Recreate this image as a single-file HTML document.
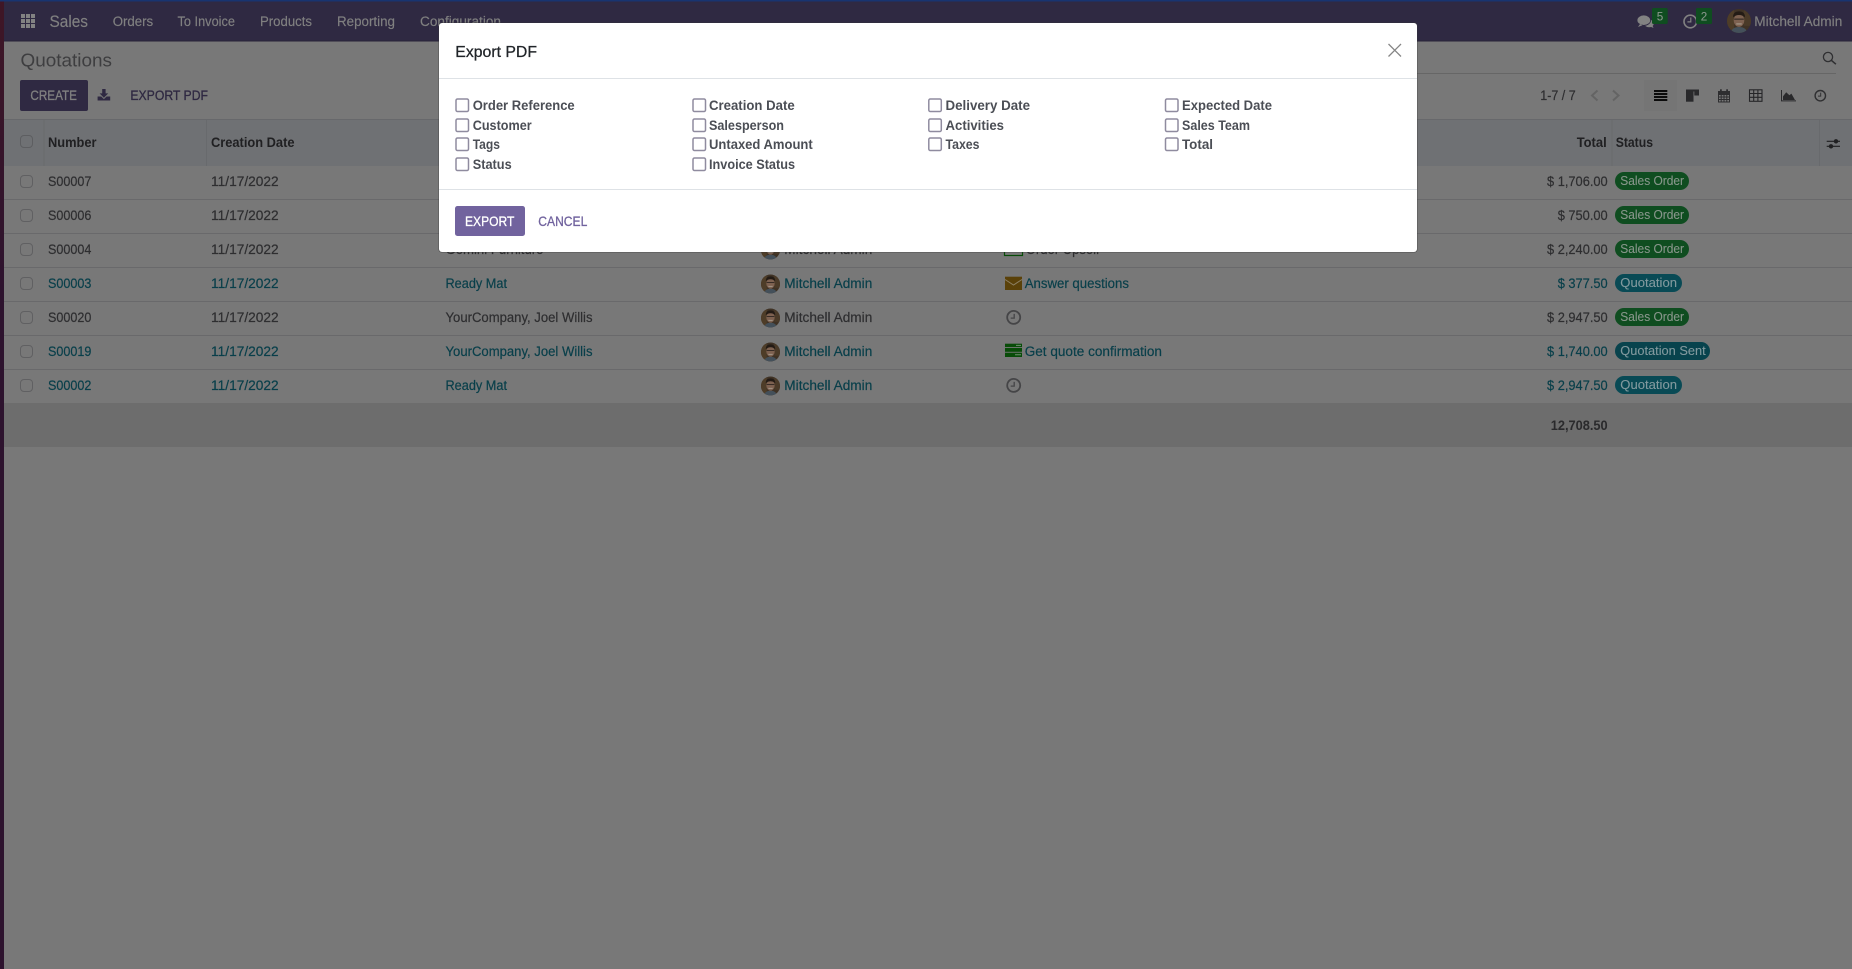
<!DOCTYPE html>
<html lang="en">
<head>
<meta charset="utf-8">
<title>Quotations - Export PDF</title>
<style>
html,body{margin:0;padding:0;width:1852px;height:969px;overflow:hidden;background:#787878}
svg{display:block;font-family:"Liberation Sans",sans-serif;font-size:13.5px}
.d{fill:#2e2e30;stroke:#2e2e30;stroke-width:.2}
.l{fill:#083f4a;stroke:#083f4a;stroke-width:.2}
.h{fill:#202022;font-weight:bold;font-size:13.5px}
.n{fill:#808080;font-size:13.5px;stroke:#808080;stroke-width:.15}
.b{fill:#88968b;font-size:12.5px;stroke:#88968b;stroke-width:.1}
.bi{fill:#82999e;font-size:12.5px;stroke:#82999e;stroke-width:.1}
.m{fill:#4b4e55;font-weight:bold;font-size:13.5px}
.c{fill:#fff;stroke:#8f8b9f;stroke-width:1.5}
.k{fill:none;stroke:#606062;stroke-width:1}
.ln{fill:#69696b}
</style>
</head>
<body>
<svg width="1852" height="969" viewBox="0 0 1852 969" xmlns="http://www.w3.org/2000/svg">
<defs>
<linearGradient id="strip" x1="0" y1="0" x2="0" y2="1"><stop offset="0" stop-color="#3f1626"/><stop offset=".3" stop-color="#2d132e"/><stop offset="1" stop-color="#2d132e"/></linearGradient>
<clipPath id="av"><circle cx="0" cy="0" r="10"/></clipPath>
<g id="avatar"><g clip-path="url(#av)">
<rect x="-10" y="-10" width="20" height="20" fill="#3f3225"/>
<rect x="-10" y="-10" width="6" height="20" fill="#4e3d28"/>
<rect x="4" y="-10" width="6" height="14" fill="#4a3a28"/>
<path d="M-7 10q1-5 7-5t7 5z" fill="#44505a"/>
<ellipse cx="0" cy="-.5" rx="4.4" ry="5.4" fill="#7d6150"/>
<path d="M-5-3q0-5 5-5t5 5q-2-2-5-2t-5 2z" fill="#231b15"/>
<rect x="-4" y="-2" width="8" height=".9" fill="#2c2420"/>
<rect x="-2.3" y="2" width="4.6" height=".9" fill="#a89e90"/>
</g></g>
<g id="clock"><circle cx="0" cy="0" r="6.5" fill="none" stroke="#454547" stroke-width="1.8"/><path d="M.5-3.5V.7H-3" fill="none" stroke="#454547" stroke-width="1.3"/></g>
</defs>

<!-- page -->
<rect width="1852" height="969" fill="#787878"/>
<rect x="0" y="0" width="4" height="969" fill="url(#strip)"/>

<!-- navbar -->
<rect x="4" y="0" width="1848" height="41" fill="#2f2942"/>
<rect x="0" y="0" width="1852" height="1.5" fill="#183470"/>
<rect x="4" y="40.5" width="1848" height="1" fill="#272238"/>
<g fill="#828282">
<rect x="21" y="14" width="4" height="4"/><rect x="26" y="14" width="4" height="4"/><rect x="31" y="14" width="4" height="4"/>
<rect x="21" y="19" width="4" height="4"/><rect x="26" y="19" width="4" height="4"/><rect x="31" y="19" width="4" height="4"/>
<rect x="21" y="24" width="4" height="4"/><rect x="26" y="24" width="4" height="4"/><rect x="31" y="24" width="4" height="4"/>
</g>
<text x="49.5" y="27" style="font-size:17px" class="n" textLength="38.5" lengthAdjust="spacingAndGlyphs">Sales</text>
<text x="112.7" y="26" class="n" textLength="40.5" lengthAdjust="spacingAndGlyphs">Orders</text>
<text x="177.5" y="26" class="n" textLength="57.5" lengthAdjust="spacingAndGlyphs">To Invoice</text>
<text x="260" y="26" class="n" textLength="52" lengthAdjust="spacingAndGlyphs">Products</text>
<text x="337" y="26" class="n" textLength="58" lengthAdjust="spacingAndGlyphs">Reporting</text>
<text x="420" y="26" class="n" textLength="81" lengthAdjust="spacingAndGlyphs">Configuration</text>
<!-- systray -->
<ellipse cx="1649" cy="23.5" rx="4.8" ry="3.8" fill="#828282"/>
<path d="M1652.5 25.5l1 2.5-3.5-1.5z" fill="#828282"/>
<ellipse cx="1643.8" cy="20.2" rx="6.8" ry="5.2" fill="#828282" stroke="#2f2942" stroke-width=".8"/>
<path d="M1640 24l-2 3 4.5-1.8z" fill="#828282"/>
<rect x="1652" y="8" width="15.7" height="16" rx="1.5" fill="#0f4d20"/>
<text x="1656.8" y="20.5" class="b" style="font-size:12px" textLength="6.5" lengthAdjust="spacingAndGlyphs">5</text>
<circle cx="1690.3" cy="21.5" r="6.3" fill="none" stroke="#828282" stroke-width="1.6"/>
<path d="M1690.8 17.5v4.4h-3.4" fill="none" stroke="#828282" stroke-width="1.2"/>
<rect x="1696" y="8" width="16" height="16" rx="1.5" fill="#0f4d20"/>
<text x="1700.8" y="20.5" class="b" style="font-size:12px" textLength="6.5" lengthAdjust="spacingAndGlyphs">2</text>
<use href="#avatar" transform="translate(1739 21) scale(1.2)"/>
<text x="1754.3" y="26" class="n" textLength="88" lengthAdjust="spacingAndGlyphs">Mitchell Admin</text>

<!-- control panel -->
<text x="20.5" y="66.5" style="font-size:18.5px;fill:#3e3e40" textLength="91.5" lengthAdjust="spacingAndGlyphs">Quotations</text>
<rect x="1400" y="73" width="436" height="1" fill="#666"/>
<circle cx="1828" cy="57" r="4.6" fill="none" stroke="#303032" stroke-width="1.3"/>
<path d="M1831.3 60.3l4.6 3.9" stroke="#303032" stroke-width="1.6" fill="none"/>

<rect x="20" y="80" width="68" height="31" rx="2" fill="#2f2942"/>
<text x="30.4" y="100" class="n" style="font-size:13.5px;stroke-width:.3" textLength="46.6" lengthAdjust="spacingAndGlyphs">CREATE</text>
<path d="M102.2 89h3.4v4.4h2.6l-4.3 4.3-4.3-4.3h2.6z" fill="#2f2942"/>
<path d="M97.6 96.5h3.6l2.7 2.6 2.7-2.6h3.6v4h-12.6z" fill="#2f2942"/>
<text x="130.4" y="100" style="font-size:13.5px;fill:#2f2942;stroke:#2f2942;stroke-width:.3" textLength="77.6" lengthAdjust="spacingAndGlyphs">EXPORT PDF</text>

<text x="1540.3" y="100" class="d" textLength="35.4" lengthAdjust="spacingAndGlyphs">1-7 / 7</text>
<path d="M1597.5 90.5l-5.5 5 5.5 5" fill="none" stroke="#646464" stroke-width="2"/>
<path d="M1613 90.5l5.5 5-5.5 5" fill="none" stroke="#646464" stroke-width="2"/>
<rect x="1644" y="80" width="33" height="31" fill="#757575"/>
<g fill="#0b0b0b">
<rect x="1654" y="90" width="13.3" height="2"/><rect x="1654" y="93" width="13.3" height="2"/><rect x="1654" y="96" width="13.3" height="2"/><rect x="1654" y="99" width="13.3" height="2"/>
</g>
<g fill="#29292b">
<rect x="1686" y="89.5" width="13" height="2"/><rect x="1686" y="91.5" width="7.5" height="10.2"/><rect x="1694.3" y="91.5" width="4.7" height="4"/>
</g>
<g fill="none" stroke="#2e2e30" stroke-width="1">
<rect x="1718.5" y="91.5" width="11" height="10.5"/>
<path d="M1718.5 94.5h11M1718.5 97h11M1718.5 99.5h11M1721.2 94.5v7.5M1724 94.5v7.5M1726.8 94.5v7.5"/>
</g>
<rect x="1718.5" y="91.5" width="11" height="2.5" fill="#2e2e30"/>
<rect x="1720" y="89.3" width="1.8" height="3" fill="#2e2e30"/><rect x="1726.2" y="89.3" width="1.8" height="3" fill="#2e2e30"/>
<g fill="none" stroke="#262628" stroke-width="1.1">
<rect x="1749.5" y="89.8" width="12.5" height="11.5"/>
<path d="M1749.5 93.5h12.5M1749.5 97.3h12.5M1753.7 89.8v11.5M1757.9 89.8v11.5"/>
</g>
<path d="M1781 90h1v10.4h14v1h-15z" fill="#29292b"/>
<path d="M1783 100v-3.6l3.2-4.2 3.2 3 2-1.6 3.6 6.4z" fill="#29292b"/>
<circle cx="1820.3" cy="95.7" r="5.2" fill="none" stroke="#303032" stroke-width="1.4"/>
<path d="M1820.7 92.6v3.5h-2.7" fill="none" stroke="#303032" stroke-width="1"/>

<!-- list header -->
<rect x="4" y="119" width="1848" height="47" fill="#6f7174"/>
<rect x="4" y="119" width="1848" height="1" fill="#67686b"/>
<g fill="#686a6d">
<rect x="43.5" y="120" width="1" height="46"/><rect x="206" y="120" width="1" height="46"/>
<rect x="1611.5" y="120" width="1" height="46"/><rect x="1819" y="120" width="1" height="46"/>
</g>
<rect x="20.5" y="135.5" width="12" height="12" rx="3.5" fill="none" stroke="#5d5e61"/>
<text x="48" y="147" class="h" textLength="48.5" lengthAdjust="spacingAndGlyphs">Number</text>
<text x="211" y="147" class="h" textLength="83.5" lengthAdjust="spacingAndGlyphs">Creation Date</text>
<text x="1576.7" y="147" class="h" textLength="30" lengthAdjust="spacingAndGlyphs">Total</text>
<text x="1615.7" y="147" class="h" textLength="37.3" lengthAdjust="spacingAndGlyphs">Status</text>
<g stroke="#202022" fill="#202022">
<path d="M1826.7 141.3h13.3M1826.7 146.3h13.3" stroke-width="1.2" fill="none"/>
<circle cx="1836" cy="141.3" r="2.2" stroke="none"/><circle cx="1831" cy="146.3" r="2.2" stroke="none"/>
</g>

<!-- row separators -->
<rect class="ln" x="4" y="199" width="1848" height="1"/>
<rect class="ln" x="4" y="233" width="1848" height="1"/>
<rect class="ln" x="4" y="267" width="1848" height="1"/>
<rect class="ln" x="4" y="301" width="1848" height="1"/>
<rect class="ln" x="4" y="335" width="1848" height="1"/>
<rect class="ln" x="4" y="369" width="1848" height="1"/>
<rect x="4" y="403" width="1848" height="44" fill="#6d6d6d"/>

<!-- row checkboxes -->
<rect class="k" x="20.5" y="175.5" width="12" height="12" rx="3.5"/>
<rect class="k" x="20.5" y="209.5" width="12" height="12" rx="3.5"/>
<rect class="k" x="20.5" y="243.5" width="12" height="12" rx="3.5"/>
<rect class="k" x="20.5" y="277.5" width="12" height="12" rx="3.5"/>
<rect class="k" x="20.5" y="311.5" width="12" height="12" rx="3.5"/>
<rect class="k" x="20.5" y="345.5" width="12" height="12" rx="3.5"/>
<rect class="k" x="20.5" y="379.5" width="12" height="12" rx="3.5"/>

<!-- row 1 -->
<text x="48" y="186" class="d" textLength="43.3" lengthAdjust="spacingAndGlyphs">S00007</text>
<text x="211" y="186" class="d" textLength="67.7" lengthAdjust="spacingAndGlyphs">11/17/2022</text>
<text x="1547" y="186" class="d" textLength="60.7" lengthAdjust="spacingAndGlyphs">$ 1,706.00</text>
<rect x="1615" y="172" width="74" height="18" rx="9" fill="#0f4d20"/>
<text x="1620.3" y="185" class="b" textLength="63.7" lengthAdjust="spacingAndGlyphs">Sales Order</text>
<!-- row 2 -->
<text x="48" y="220" class="d" textLength="43.3" lengthAdjust="spacingAndGlyphs">S00006</text>
<text x="211" y="220" class="d" textLength="67.7" lengthAdjust="spacingAndGlyphs">11/17/2022</text>
<text x="1557.7" y="220" class="d" textLength="50" lengthAdjust="spacingAndGlyphs">$ 750.00</text>
<rect x="1615" y="206" width="74" height="18" rx="9" fill="#0f4d20"/>
<text x="1620.3" y="219" class="b" textLength="63.7" lengthAdjust="spacingAndGlyphs">Sales Order</text>
<!-- row 3 -->
<text x="48" y="254" class="d" textLength="43.3" lengthAdjust="spacingAndGlyphs">S00004</text>
<text x="211" y="254" class="d" textLength="67.7" lengthAdjust="spacingAndGlyphs">11/17/2022</text>
<text x="445.5" y="254" class="d" textLength="98" lengthAdjust="spacingAndGlyphs">Gemini Furniture</text>
<use href="#avatar" transform="translate(770.5 250) scale(.95)"/>
<text x="784.3" y="254" class="d" textLength="88" lengthAdjust="spacingAndGlyphs">Mitchell Admin</text>
<rect x="1004.5" y="243" width="18" height="12.5" fill="none" stroke="#084c08" stroke-width="1.2"/>
<text x="1025.7" y="254" class="d" textLength="73.3" lengthAdjust="spacingAndGlyphs">Order Upsell</text>
<text x="1547" y="254" class="d" textLength="60.7" lengthAdjust="spacingAndGlyphs">$ 2,240.00</text>
<rect x="1615" y="240" width="74" height="18" rx="9" fill="#0f4d20"/>
<text x="1620.3" y="253" class="b" textLength="63.7" lengthAdjust="spacingAndGlyphs">Sales Order</text>
<!-- row 4 -->
<text x="48" y="288" class="l" textLength="43.3" lengthAdjust="spacingAndGlyphs">S00003</text>
<text x="211" y="288" class="l" textLength="67.7" lengthAdjust="spacingAndGlyphs">11/17/2022</text>
<text x="445.5" y="288" class="l" textLength="61.5" lengthAdjust="spacingAndGlyphs">Ready Mat</text>
<use href="#avatar" transform="translate(770.5 284) scale(.95)"/>
<text x="784.3" y="288" class="l" textLength="88" lengthAdjust="spacingAndGlyphs">Mitchell Admin</text>
<rect x="1005" y="276.7" width="17" height="13.3" fill="#5a4109"/>
<path d="M1005 279.5l8.5 5.5 8.5-5.5" fill="none" stroke="#8c7f62" stroke-width="1"/>
<text x="1024.7" y="288" class="l" textLength="104.3" lengthAdjust="spacingAndGlyphs">Answer questions</text>
<text x="1557.7" y="288" class="l" textLength="50" lengthAdjust="spacingAndGlyphs">$ 377.50</text>
<rect x="1615" y="274" width="67" height="18" rx="9" fill="#094a55"/>
<text x="1620.3" y="287" class="bi" textLength="56.7" lengthAdjust="spacingAndGlyphs">Quotation</text>
<!-- row 5 -->
<text x="48" y="322" class="d" textLength="43.3" lengthAdjust="spacingAndGlyphs">S00020</text>
<text x="211" y="322" class="d" textLength="67.7" lengthAdjust="spacingAndGlyphs">11/17/2022</text>
<text x="445.5" y="322" class="d" textLength="147" lengthAdjust="spacingAndGlyphs">YourCompany, Joel Willis</text>
<use href="#avatar" transform="translate(770.5 318) scale(.95)"/>
<text x="784.3" y="322" class="d" textLength="88" lengthAdjust="spacingAndGlyphs">Mitchell Admin</text>
<use href="#clock" transform="translate(1013.7 317.4)"/>
<text x="1547" y="322" class="d" textLength="60.7" lengthAdjust="spacingAndGlyphs">$ 2,947.50</text>
<rect x="1615" y="308" width="74" height="18" rx="9" fill="#0f4d20"/>
<text x="1620.3" y="321" class="b" textLength="63.7" lengthAdjust="spacingAndGlyphs">Sales Order</text>
<!-- row 6 -->
<text x="48" y="356" class="l" textLength="43.3" lengthAdjust="spacingAndGlyphs">S00019</text>
<text x="211" y="356" class="l" textLength="67.7" lengthAdjust="spacingAndGlyphs">11/17/2022</text>
<text x="445.5" y="356" class="l" textLength="147" lengthAdjust="spacingAndGlyphs">YourCompany, Joel Willis</text>
<use href="#avatar" transform="translate(770.5 352) scale(.95)"/>
<text x="784.3" y="356" class="l" textLength="88" lengthAdjust="spacingAndGlyphs">Mitchell Admin</text>
<rect x="1005" y="343.7" width="17" height="3.4" fill="#084c08"/>
<rect x="1005" y="348" width="17" height="3.8" fill="#084c08"/>
<rect x="1005" y="352.7" width="17" height="4.3" fill="#084c08"/>
<path d="M1016 345.4h5M1015 354.8h6" stroke="#6f8f6f" stroke-width="1"/>
<text x="1024.7" y="356" class="l" textLength="137.3" lengthAdjust="spacingAndGlyphs">Get quote confirmation</text>
<text x="1547" y="356" class="l" textLength="60.7" lengthAdjust="spacingAndGlyphs">$ 1,740.00</text>
<rect x="1615" y="342" width="95" height="18" rx="9" fill="#08434d"/>
<text x="1620.3" y="355" class="bi" textLength="85.4" lengthAdjust="spacingAndGlyphs">Quotation Sent</text>
<!-- row 7 -->
<text x="48" y="390" class="l" textLength="43.3" lengthAdjust="spacingAndGlyphs">S00002</text>
<text x="211" y="390" class="l" textLength="67.7" lengthAdjust="spacingAndGlyphs">11/17/2022</text>
<text x="445.5" y="390" class="l" textLength="61.5" lengthAdjust="spacingAndGlyphs">Ready Mat</text>
<use href="#avatar" transform="translate(770.5 386) scale(.95)"/>
<text x="784.3" y="390" class="l" textLength="88" lengthAdjust="spacingAndGlyphs">Mitchell Admin</text>
<use href="#clock" transform="translate(1013.7 385.4)"/>
<text x="1547" y="390" class="l" textLength="60.7" lengthAdjust="spacingAndGlyphs">$ 2,947.50</text>
<rect x="1615" y="376" width="67" height="18" rx="9" fill="#094a55"/>
<text x="1620.3" y="389" class="bi" textLength="56.7" lengthAdjust="spacingAndGlyphs">Quotation</text>
<!-- total -->
<text x="1550.7" y="430" class="h" style="fill:#2a2a2c" textLength="57" lengthAdjust="spacingAndGlyphs">12,708.50</text>

<!-- modal -->
<rect x="438.5" y="22.5" width="979" height="230" rx="3" fill="#333" opacity=".6"/>
<rect x="439" y="23" width="978" height="229" rx="3" fill="#ffffff"/>
<text x="455.3" y="57" style="font-size:15.5px;fill:#212529;stroke:#212529;stroke-width:.25" textLength="81.7" lengthAdjust="spacingAndGlyphs">Export PDF</text>
<path d="M1388.5 44l12.5 12.5M1401 44l-12.5 12.5" stroke="#858585" stroke-width="1.3" fill="none"/>
<rect x="439" y="78" width="978" height="1" fill="#dee2e6"/>
<rect x="439" y="189" width="978" height="1" fill="#dee2e6"/>

<rect class="c" x="456" y="99" width="12.5" height="12.5" rx="1.5"/>
<rect class="c" x="456" y="119" width="12.5" height="12.5" rx="1.5"/>
<rect class="c" x="456" y="138" width="12.5" height="12.5" rx="1.5"/>
<rect class="c" x="456" y="158" width="12.5" height="12.5" rx="1.5"/>
<text x="472.7" y="110" class="m" textLength="102" lengthAdjust="spacingAndGlyphs">Order Reference</text>
<text x="472.7" y="130" class="m" textLength="59" lengthAdjust="spacingAndGlyphs">Customer</text>
<text x="472.7" y="149" class="m" textLength="27.3" lengthAdjust="spacingAndGlyphs">Tags</text>
<text x="472.7" y="169" class="m" textLength="39" lengthAdjust="spacingAndGlyphs">Status</text>

<rect class="c" x="693" y="99" width="12.5" height="12.5" rx="1.5"/>
<rect class="c" x="693" y="119" width="12.5" height="12.5" rx="1.5"/>
<rect class="c" x="693" y="138" width="12.5" height="12.5" rx="1.5"/>
<rect class="c" x="693" y="158" width="12.5" height="12.5" rx="1.5"/>
<text x="709" y="110" class="m" textLength="85.7" lengthAdjust="spacingAndGlyphs">Creation Date</text>
<text x="709" y="130" class="m" textLength="75" lengthAdjust="spacingAndGlyphs">Salesperson</text>
<text x="709" y="149" class="m" textLength="103.7" lengthAdjust="spacingAndGlyphs">Untaxed Amount</text>
<text x="709" y="169" class="m" textLength="86" lengthAdjust="spacingAndGlyphs">Invoice Status</text>

<rect class="c" x="928.8" y="99" width="12.5" height="12.5" rx="1.5"/>
<rect class="c" x="928.8" y="119" width="12.5" height="12.5" rx="1.5"/>
<rect class="c" x="928.8" y="138" width="12.5" height="12.5" rx="1.5"/>
<text x="945.5" y="110" class="m" textLength="84.5" lengthAdjust="spacingAndGlyphs">Delivery Date</text>
<text x="945.5" y="130" class="m" textLength="58.5" lengthAdjust="spacingAndGlyphs">Activities</text>
<text x="945.5" y="149" class="m" textLength="34" lengthAdjust="spacingAndGlyphs">Taxes</text>

<rect class="c" x="1165.5" y="99" width="12.5" height="12.5" rx="1.5"/>
<rect class="c" x="1165.5" y="119" width="12.5" height="12.5" rx="1.5"/>
<rect class="c" x="1165.5" y="138" width="12.5" height="12.5" rx="1.5"/>
<text x="1182" y="110" class="m" textLength="90" lengthAdjust="spacingAndGlyphs">Expected Date</text>
<text x="1182" y="130" class="m" textLength="68" lengthAdjust="spacingAndGlyphs">Sales Team</text>
<text x="1182" y="149" class="m" textLength="31" lengthAdjust="spacingAndGlyphs">Total</text>

<rect x="455" y="206" width="70" height="30" rx="2.5" fill="#71639e"/>
<text x="465" y="226" style="font-size:13.5px;fill:#fff;stroke:#fff;stroke-width:.3" textLength="49.3" lengthAdjust="spacingAndGlyphs">EXPORT</text>
<text x="538.3" y="226" style="font-size:13.5px;fill:#71639e;stroke:#71639e;stroke-width:.3" textLength="49" lengthAdjust="spacingAndGlyphs">CANCEL</text>
</svg>
</body>
</html>
